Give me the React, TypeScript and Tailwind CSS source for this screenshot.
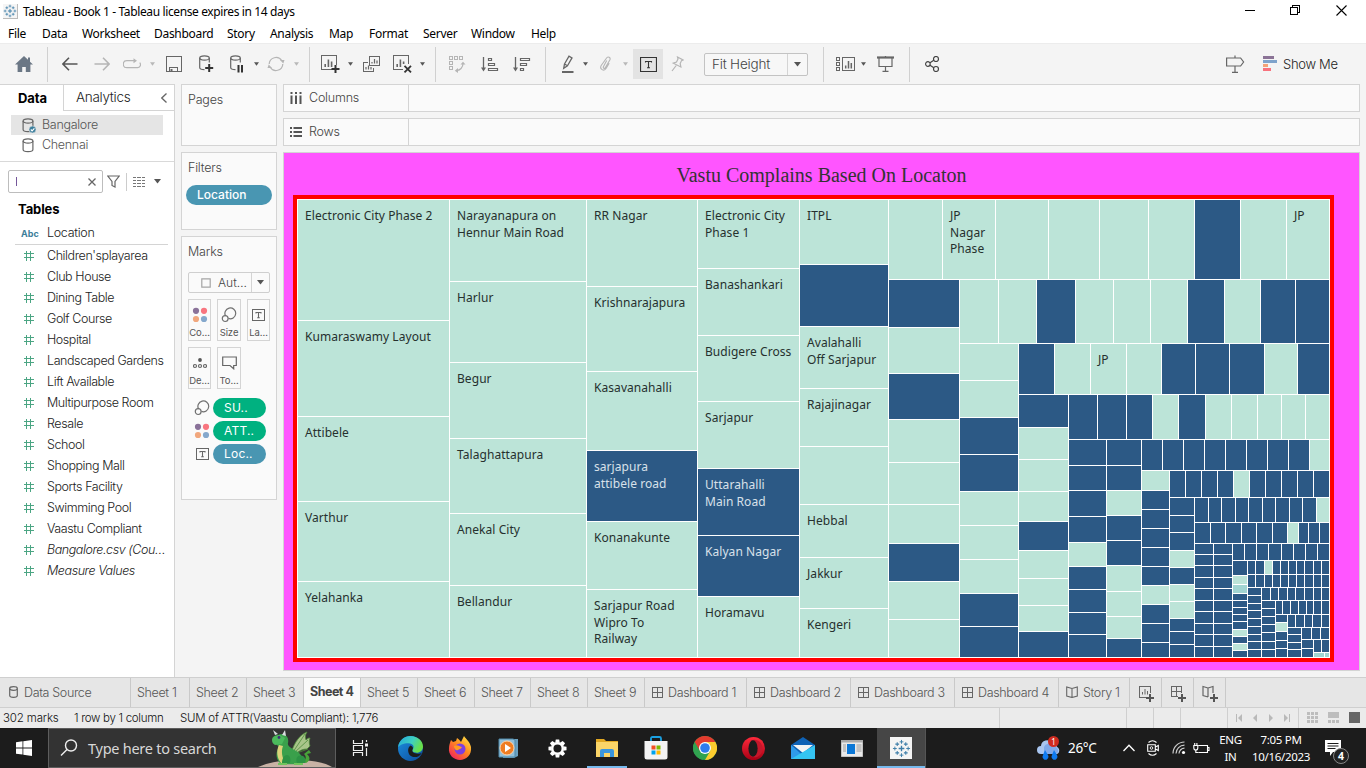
import React from "react";

type P = { children?: React.ReactNode; className?: string };

/* ---------- treemap data ---------- */

type Cell = { x: number; y: number; w: number; h: number; c: string; label?: string[] };

const FILL: Record<string, string> = { L: "#bce4d8", D: "#2c5985", T: "#a1d5d2" };

function column(x0: number, x1: number, ys: number[], colors: string, labels: Record<number, string[]> = {}): Cell[] {
  return ys.slice(1).map((y, i) => ({
    x: x0 + 1, y: ys[i] + 1, w: x1 - x0 - 1, h: y - ys[i] - 1, c: colors[i], label: labels[i],
  }));
}
function row(y0: number, y1: number, xs: number[], colors: string, labels: Record<number, string[]> = {}): Cell[] {
  return xs.slice(1).map((x, i) => ({
    x: xs[i] + 1, y: y0 + 1, w: x - xs[i] - 1, h: y1 - y0 - 1, c: colors[i], label: labels[i],
  }));
}

const tens = [543, 554, 565, 577, 588, 600, 611, 623, 634, 646, 657];
const cells: Cell[] = [
  ...column(297, 449, [199, 320, 416, 501, 581, 657], "LLLLL", {
    0: ["Electronic City Phase 2"], 1: ["Kumaraswamy Layout"], 2: ["Attibele"], 3: ["Varthur"], 4: ["Yelahanka"],
  }),
  ...column(449, 586, [199, 281, 362, 438, 513, 585, 657], "LLLLLL", {
    0: ["Narayanapura on", "Hennur Main Road"], 1: ["Harlur"], 2: ["Begur"], 3: ["Talaghattapura"], 4: ["Anekal City"], 5: ["Bellandur"],
  }),
  ...column(586, 697, [199, 286, 371, 450, 521, 589, 657], "LLLDLL", {
    0: ["RR Nagar"], 1: ["Krishnarajapura"], 2: ["Kasavanahalli"], 3: ["sarjapura", "attibele road"], 4: ["Konanakunte"],
    5: ["Sarjapur Road", "Wipro To", "Railway"],
  }),
  ...column(697, 799, [199, 268, 335, 401, 468, 535, 596, 657], "LLLLDDL", {
    0: ["Electronic City", "Phase 1"], 1: ["Banashankari"], 2: ["Budigere Cross"], 3: ["Sarjapur"],
    4: ["Uttarahalli", "Main Road"], 5: ["Kalyan Nagar"], 6: ["Horamavu"],
  }),
  ...column(799, 888, [199, 264, 326, 388, 446, 504, 557, 608, 657], "LDLLLLLL", {
    0: ["ITPL"], 2: ["Avalahalli", "Off Sarjapur"], 3: ["Rajajinagar"], 5: ["Hebbal"], 6: ["Jakkur"], 7: ["Kengeri"],
  }),
  ...row(199, 279, [888, 942, 995, 1048, 1099, 1148, 1194, 1240, 1286, 1329], "LLLLLLDLL", {
    1: ["JP", "Nagar", "Phase"], 8: ["JP"],
  }),
  ...column(888, 959, [279, 327, 373, 419, 462, 504, 543, 581, 619, 657], "DLDLLLDLL"),
  ...row(279, 343, [959, 998, 1036, 1075, 1113, 1150, 1187, 1224, 1260, 1295, 1329], "LLDLLLDLDD"),
  ...column(959, 1018, [343, 380, 417, 454, 491, 525, 559, 593, 626, 657], "LLDDLLLDD"),
  ...row(343, 394, [1018, 1054, 1090, 1126, 1161, 1195, 1229, 1264, 1297, 1329], "DLLLDDDLD", { 2: ["JP"] }),
  ...column(1018, 1068, [394, 427, 459, 491, 521, 550, 578, 605, 631, 657], "DLLLDLLLD"),
  ...row(394, 439, [1068, 1097, 1126, 1152, 1178, 1205, 1231, 1257, 1281, 1305, 1329], "DDDLDLLLLL"),
  ...column(1068, 1106, [439, 465, 490, 516, 542, 566, 589, 612, 634, 657], "DDDDLDDDD"),
  ...column(1106, 1141, [439, 465, 490, 515, 540, 565, 591, 616, 638, 657], "DDLDDLLLD"),
  ...row(439, 470, [1141, 1162, 1183, 1204, 1225, 1246, 1267, 1288, 1309, 1329], "DDDDDDDDL"),
  ...column(1141, 1169, [470, 490, 509, 528, 547, 566, 585, 604, 623, 642, 657], "LDDDDDLDDD"),
  ...row(470, 497, [1169, 1185, 1201, 1217, 1233, 1249, 1265, 1281, 1297, 1313, 1329], "DDDDLDDDDD"),
  ...column(1169, 1194, [497, 515, 532, 550, 567, 584, 601, 618, 631, 644, 657], "DDDLDLLDDD"),
  ...row(497, 522, [1194, 1208, 1221, 1235, 1248, 1262, 1275, 1289, 1302, 1316, 1329], "DDDDDDDDDL"),
  ...row(522, 543, [1194, 1210, 1225, 1241, 1256, 1272, 1287, 1298, 1308, 1319, 1329], "DDDDDDLDDD"),
  ...column(1194, 1213, tens, "DDDDDDDDDD"),
  ...column(1213, 1232, tens, "DDDDDDDDDD"),
  ...row(543, 560, [1232, 1244, 1256, 1268, 1281, 1293, 1305, 1317, 1329], "DDDDDDDD"),
  ...column(1232, 1247, [560, 575, 584, 593, 600, 607, 614, 621, 629, 636, 643, 650, 657], "DLTDDDDDLDLD"),
  ...row(560, 574, [1247, 1255, 1264, 1272, 1280, 1288, 1296, 1304, 1313, 1321, 1329], "DDLDDDDDDD"),
  ...row(574, 587, [1247, 1255, 1264, 1272, 1280, 1288, 1296, 1304, 1313, 1321, 1329], "DDDDDDDDDD"),
  ...column(1247, 1261, [587, 595, 603, 610, 618, 626, 634, 641, 649, 657], "DDDDDDDDD"),
  ...row(587, 600, [1261, 1270, 1278, 1287, 1295, 1304, 1313, 1321, 1329], "DDDDDDDD"),
  ...column(1261, 1275, [600, 608, 616, 624, 632, 641, 649, 657], "DDDDDDD"),
  ...row(600, 614, [1275, 1282, 1290, 1298, 1306, 1313, 1321, 1329], "DDDDDDD"),
  ...column(1275, 1287, [614, 622, 631, 640, 648, 657], "DLDDD"),
  ...row(614, 627, [1287, 1295, 1304, 1312, 1321, 1329], "DDDDD"),
  ...column(1287, 1301, [627, 634, 642, 649, 657], "DDDD"),
  ...row(627, 639, [1301, 1311, 1320, 1329], "DDD"),
  ...column(1301, 1313, [639, 648, 657], "DD"),
  ...row(639, 652, [1313, 1321, 1329], "DD"),
  ...row(652, 657, [1313, 1324, 1329], "TT"),
];

function Treemap() {
  return (
    <svg width="1041" height="467" viewBox="293 195 1041 467" className="block shrink-0">
      <rect x="293" y="195" width="1041" height="467" fill="#f00" />
      <rect x="297" y="199" width="1033" height="459" fill="#fff" />
      {cells.map((c, i) => (
        <rect key={i} x={c.x} y={c.y} width={c.w} height={c.h} fill={FILL[c.c]} shapeRendering="crispEdges" />
      ))}
      {cells.map((c, i) =>
        c.label?.map((t, j) => (
          <text
            key={`${i}-${j}`}
            x={c.x + 7}
            y={c.y + 20 + j * 16.5}
            fill={c.c === "D" ? "#d8e1ea" : "#26302e"}
            className="font-['Noto_Sans',sans-serif] text-[12px] tracking-[0.06px]"
          >
            {t}
          </text>
        ))
      )}
    </svg>
  );
}

/* ---------- small pieces ---------- */

function Ic({ w, h, children, className = "", stroke = "#666" }: P & { w: number; h: number; stroke?: string }) {
  return (
    <svg width={w} height={h} viewBox={`0 0 ${w} ${h}`} fill="none" stroke={stroke} strokeWidth="1.2" className={`block shrink-0 ${className}`}>
      {children}
    </svg>
  );
}
const Sep = ({ className = "" }: P) => <div className={`h-[35px] w-px shrink-0 bg-[#d0d0d0] ${className}`} />;
const Caret = ({ className = "", light = false }: P & { light?: boolean }) => (
  <Ic w={5} h={4} className={className}><path d="M0 0.3h5L2.5 3.8z" fill={light ? "#b8b8b8" : "#555"} stroke="none" /></Ic>
);
const Drop = ({ className = "" }: P) => (
  <Ic w={7} h={5} className={className}><path d="M0 0h7L3.5 4.5z" fill="#555" stroke="none" /></Ic>
);
const Cyl = () => (
  <>
    <ellipse cx="6" cy="3" rx="4.9" ry="2.2" />
    <path d="M1.1 3v8.5c0 1.2 2 2.2 4.9 2.2s4.9-1 4.9-2.2V3" />
  </>
);
const Dots = ({ s = 18 }: { s?: number }) => (
  <svg width={s} height={s} viewBox="0 0 18 18" className="block shrink-0">
    <circle cx="5" cy="4.8" r="3.1" fill="#8a7299" /><circle cx="13" cy="4.8" r="3.1" fill="#f8757f" />
    <circle cx="5" cy="13" r="3.1" fill="#f1a77d" /><circle cx="13" cy="13" r="3.1" fill="#85a8cc" />
  </svg>
);
const SizeIc = ({ className = "" }: P) => (
  <Ic w={16} h={16} className={className} stroke="#707070">
    <path d="M4.6 9A5.4 5.4 0 1 1 7.4 11.4" /><circle cx="4.2" cy="11.6" r="2.9" />
  </Ic>
);
const LabelIc = ({ w = 13 }: { w?: number }) => (
  <Ic w={w} h={12}>
    <path d={`M.5 .5h${w - 1}v11h-${w - 1}z`} shapeRendering="crispEdges" strokeWidth="1" />
    <path d="M4 4.5V3.5h5v1M6.5 3.5v5M5.2 8.7h2.6" strokeWidth="1.1" />
  </Ic>
);
const GridIc = () => (
  <Ic w={11} h={11} className="mb-[2px] mr-[5px]"><path d="M.5.5h10v10H.5zM5.5.5v10M.5 5.5h10" strokeWidth="1" shapeRendering="crispEdges" /></Ic>
);
const BookIc = ({ className = "" }: P) => (
  <Ic w={12} h={12} className={className}><path d="M6 2.5L.7 1v9L6 11.5 11.3 10V1zM6 2.5v9" strokeWidth="1.1" /></Ic>
);

/* ---------- title + menu ---------- */

function TableauMark({ s, c = "#3c7da8" }: { s: number; c?: string }) {
  return (
    <svg width={s} height={s} viewBox="0 0 20 20" stroke={c} className="block shrink-0">
      <path d="M10 7v6M7 10h6" strokeWidth="1.4" />
      <path d="M10 1v4M8 3h4M10 15v4M8 17h4M1 10h4M3 8v4M15 10h4M17 8v4" strokeWidth="1" />
      <path d="M5.5 3.4v4M3.5 5.4h4M14.5 3.4v4M12.5 5.4h4M5.5 12.6v4M3.5 14.6h4M14.5 12.6v4M12.5 14.6h4" strokeWidth="1.1" />
    </svg>
  );
}

function TitleBar() {
  return (
    <div className="flex h-[23px] bg-white">
      <div className="ml-[3px] mt-[4px] flex h-[15px] w-[15px] items-center justify-center border-b border-r border-[#bbb] bg-[#f5f5f5]"><TableauMark s={14} /></div>
      <div className="ml-[5px] mt-[3px] whitespace-nowrap text-[12px] leading-[17px] tracking-[-0.38px] text-black">
        Tableau - Book 1 - Tableau license expires in 14 days
      </div>
      <div className="ml-auto mr-[19px] flex pt-[5px]">
        <Ic w={10} h={10} stroke="#000"><path d="M0 5.5h10" strokeWidth="1" /></Ic>
        <Ic w={11} h={10} stroke="#000" className="ml-[35px]"><path d="M.5 2.5h7v7h-7zM2.5 2.5v-2h7v7h-2" strokeWidth="1" shapeRendering="crispEdges" /></Ic>
        <Ic w={11} h={11} stroke="#000" className="ml-[35px]"><path d="M.5.5l10 10M10.5.5l-10 10" strokeWidth="1.1" /></Ic>
      </div>
    </div>
  );
}

function MenuBar() {
  const m: [string, string][] = [
    ["File", "w-[34px]"], ["Data", "w-[40px]"], ["Worksheet", "w-[72px]"], ["Dashboard", "w-[73px]"], ["Story", "w-[43px]"],
    ["Analysis", "w-[59px]"], ["Map", "w-[40px]"], ["Format", "w-[54px]"], ["Server", "w-[48px]"], ["Window", "w-[60px]"], ["Help", "w-[40px]"],
  ];
  return (
    <div className="flex h-[20px] bg-white pl-[8px]">
      {m.map(([t, w]) => (
        <div key={t} className={`${w} shrink-0 whitespace-nowrap text-[12px] leading-[22px] tracking-[-0.3px] text-black`}>{t}</div>
      ))}
    </div>
  );
}

/* ---------- toolbar ---------- */

function Toolbar() {
  return (
    <div className="flex h-[41px] items-center border-t border-[#ececec] bg-[#f4f4f4]">
      <Ic w={18} h={16} className="ml-[15px]"><path d="M9 0L0 8.5h2.6V16h4.6v-5h3.6v5h4.6V8.5H18l-3-2.8V1.5h-2v2.3z" fill="#6b7785" stroke="none" /></Ic>
      <Sep className="ml-[14px]" />
      <Ic w={16} h={14} className="ml-[14px]" stroke="#555"><path d="M15.5 7H1M7 .8L.9 7l6.1 6.2" strokeWidth="1.6" /></Ic>
      <Ic w={16} h={14} className="ml-[16px]" stroke="#b5b5b5"><path d="M.5 7H15M9 .8L15.1 7 9 13.2" strokeWidth="1.6" /></Ic>
      <Ic w={18} h={12} className="ml-[13px]" stroke="#b5b5b5"><path d="M12 2.700H3.800a3 3 0 0 0 0 7h10.400a3 3 0 0 0 2.500-5" /><path d="M10.500.2v5L14 2.700z" fill="#b5b5b5" stroke="none" /></Ic>
      <Caret className="ml-[9px]" light />
      <Ic w={16} h={16} className="ml-[11px]"><path d="M.5.5h15v15H.5zM3.5 15.5v-4h8v4" strokeWidth="1" shapeRendering="crispEdges" /><path d="M5.5 13v3" strokeWidth="2" /></Ic>
      <Ic w={15} h={18} className="ml-[17px]">
        <ellipse cx="5.5" cy="3" rx="4.8" ry="2.2" /><path d="M.7 3v9.5c0 1.3 2 2.2 4.8 2.2M10.3 3v4.5" />
        <path d="M10.2 9v8M6.2 13h8" stroke="#333" strokeWidth="2" />
      </Ic>
      <Ic w={14} h={18} className="ml-[16px]">
        <ellipse cx="5.5" cy="3" rx="4.8" ry="2.2" /><path d="M.7 3v9.5c0 1.3 2 2.2 4.8 2.2M10.3 3v4.5" />
        <path d="M8.5 10v7.5M12 10v7.5" stroke="#333" strokeWidth="2" />
      </Ic>
      <Caret className="ml-[10px]" />
      <Ic w={18} h={16} className="ml-[8px]" stroke="#b5b5b5">
        <path d="M2.2 8a6.8 6.8 0 0 1 12.6-3.2M15.8 8A6.8 6.8 0 0 1 3.2 11.2" />
        <path d="M17.5 4h-4.5l3.3 3.5zM.5 12H5L1.7 8.5z" fill="#b5b5b5" stroke="none" />
      </Ic>
      <Caret className="ml-[9px]" light />
      <Sep className="ml-[10px]" />
      <Ic w={19} h={18} className="ml-[11px]">
        <path d="M11 14.5H.5V.5h15v9" strokeWidth="1" shapeRendering="crispEdges" /><path d="M4.2 12V9M7.4 12V4.5M10.6 12V6.5" strokeWidth="1.6" />
        <path d="M14.5 10v8M10.5 14h8" stroke="#333" strokeWidth="2" />
      </Ic>
      <Caret className="ml-[8px]" />
      <Ic w={17} h={16} className="ml-[10px]">
        <path d="M6.5.5h10v9h-10zM4.5 6.5h-4v9h10v-4" strokeWidth="1" shapeRendering="crispEdges" /><path d="M9 7.5V6M11.5 7.5V3M14 7.5V4.5M3 13.5V11M5.5 13.5V9.5M8 13.5V11" />
      </Ic>
      <Ic w={19} h={18} className="ml-[13px]">
        <path d="M10 14.5H.5V.5h15v8" strokeWidth="1" shapeRendering="crispEdges" /><path d="M4.2 12V9M7.4 12V4.5M10.6 9V6.5" strokeWidth="1.6" />
        <path d="M11.5 10.8l6.5 6.5M18 10.8l-6.5 6.5" stroke="#333" strokeWidth="1.8" />
      </Ic>
      <Caret className="ml-[8px]" />
      <Sep className="ml-[10px]" />
      <Ic w={17} h={17} className="ml-[13px]" stroke="#b5b5b5">
        <path d="M.5.5h3v3h-3zM5.5.5h3v3h-3zM10.500.5h3v3h-3zM.5 5.500h3v3h-3zM.5 10.500h3v3h-3z" strokeWidth="1" shapeRendering="crispEdges" />
        <path d="M14 7.500c0 4-3 7-6.500 7" /><path d="M11.500 8.500L14 5.800l2.500 2.700zM9 12l-3.200 2.700L9 17z" fill="#b5b5b5" stroke="none" />
      </Ic>
      <Ic w={18} h={15} className="ml-[15px]">
        <path d="M2.500 0v12" strokeWidth="1.300" /><path d="M0 10.500h5L2.500 14.500z" fill="#666" stroke="none" />
        <path d="M7.500 1.500h3v2h-3zM7.500 6.500h6v2h-6zM7.500 11.500h9v2h-9z" strokeWidth="1.200" />
      </Ic>
      <Ic w={18} h={15} className="ml-[14px]">
        <path d="M2.500 0v12" strokeWidth="1.300" /><path d="M0 10.500h5L2.500 14.500z" fill="#666" stroke="none" />
        <path d="M7.500 1.500h9v2h-9zM7.500 6.500h6v2h-6zM7.500 11.500h3v2h-3z" strokeWidth="1.200" />
      </Ic>
      <Sep className="ml-[14px]" />
      <Ic w={12} h={18} className="ml-[16px]">
        <path d="M2.500 9L7 1.200l3 1.700L5.500 10.700zM2.500 9l-.8 4.300 3.800-2.600" strokeWidth="1.300" /><path d="M0 17h11.500" strokeWidth="2" />
      </Ic>
      <Caret className="ml-[9px]" />
      <Ic w={13} h={16} className="ml-[11px]" stroke="#b5b5b5">
        <path d="M7.700 4.500L4.500 10.500c-.8 1.700 1 2.600 1.900 1l4.400-7.400c1.300-2.600-2-4.300-3.400-1.900L2.200 9.500c-2 3.700 2.800 6.400 5 2.800l3-5" strokeWidth="1.100" />
      </Ic>
      <Caret className="ml-[11px]" light />
      <div className="ml-[5px] flex h-[30px] w-[30px] shrink-0 items-center justify-center bg-[#e3e3e3]">
        <Ic w={17} h={15} stroke="#333"><path d="M.5.5h16v14H.5z" strokeWidth="1.200" /><path d="M5.500 5.500V4.500h6v1M8.500 4.500v6M7 10.800h3" strokeWidth="1.100" /></Ic>
      </div>
      <Ic w={13} h={16} className="ml-[8px]" stroke="#b5b5b5">
        <path d="M6.500 1l5.500 3-1.500.6-1.300 3 .7 3.400L2.300 7.200l3.200-1.100L7 3zM5.200 9.500L1 15" strokeWidth="1.200" />
      </Ic>
      <div className="ml-[20px] flex h-[23px] w-[104px] shrink-0 items-center rounded-[2px] border border-[#c3c3c3] bg-[#f7f7f7]">
        <span className="w-[84px] pl-[7px] font-['Inter',sans-serif] text-[13.5px] font-light leading-[20px] tracking-[-0.2px] text-[#444]">Fit Height</span>
        <span className="flex h-full w-[20px] items-center justify-center border-l border-[#d4d4d4]"><Drop /></span>
      </div>
      <Sep className="ml-[15px]" />
      <Ic w={19} h={14} className="ml-[12px]">
        <path d="M.5.5h3v3h-3zM.5 5.500h3v3h-3zM.5 10.500h3v3h-3zM6.500.5h12v13h-12z" strokeWidth="1" shapeRendering="crispEdges" />
        <path d="M9.700 11.500v-3M12.500 11.500V4M15.300 11.500V6" strokeWidth="1.500" />
      </Ic>
      <Caret className="ml-[6px]" />
      <Ic w={17} h={16} className="ml-[11px]">
        <path d="M0 1.500h17" strokeWidth="2.200" /><path d="M2 2v8.500h13V2M8.500 10.500v5M5.500 15.300h6M8.500 0v1" />
      </Ic>
      <Sep className="ml-[15px]" />
      <Ic w={15} h={16} className="ml-[15px]" stroke="#444">
        <circle cx="2.900" cy="8" r="2.300" /><circle cx="11" cy="3" r="2.500" /><circle cx="11" cy="13" r="2.500" /><path d="M5 6.800L8.800 4.300M5 9.200l3.800 2.500" />
      </Ic>
      <Ic w={19} h={18} className="ml-auto"><path d="M.6 3h14l3 4-3 4H.6zM9 .5V3M9 11v6.500M6 17.300h6" /></Ic>
      <Ic w={14} h={16} className="ml-[18px]"><g stroke="none"><path d="M0 0h11v3H0z" fill="#8b7396" /><path d="M0 4h14v3H0z" fill="#7fa3cb" /><path d="M0 8h5v3H0z" fill="#f3a277" /><path d="M0 12h8v3H0z" fill="#f8727d" /></g></Ic>
      <div className="ml-[6px] w-[83px] whitespace-nowrap font-['Inter',sans-serif] text-[13px] font-light leading-[20px] tracking-[-0.3px] text-[#222]">Show Me</div>
    </div>
  );
}

/* ---------- data pane ---------- */

const fields = [
  "Children'splayarea", "Club House", "Dining Table", "Golf Course", "Hospital", "Landscaped Gardens", "Lift Available",
  "Multipurpose Room", "Resale", "School", "Shopping Mall", "Sports Facility", "Swimming Pool", "Vaastu Compliant",
  "Bangalore.csv (Cou…", "Measure Values",
];

function DataPane() {
  return (
    <div className="flex w-[175px] shrink-0 flex-col border-r border-t border-[#d4d4d4] bg-white font-['Inter',sans-serif] text-[12.5px] font-light tracking-[-0.3px] text-[#222]">
      <div className="flex h-[26px]">
        <div className="w-[63px] pl-[18px] text-[13px] font-bold leading-[26px] tracking-[-0.1px] text-black">Data</div>
        <div className="flex flex-1 items-center border-b border-l border-[#d4d4d4]">
          <span className="ml-[12px] text-[13.5px] text-[#222]">Analytics</span>
          <Ic w={6} h={10} className="ml-auto mr-[7px]"><path d="M5.500.5L.8 5l4.700 4.500" strokeWidth="1.300" /></Ic>
        </div>
      </div>
      <div className="ml-[11px] mt-[4px] flex h-[20px] w-[152px] items-center bg-[#e5e5e5] text-[#555]">
        <Ic w={14} h={15} className="ml-[11px]"><Cyl /><circle cx="10.500" cy="11.500" r="3.500" fill="#3b7e9c" stroke="#e5e5e5" strokeWidth=".6" /><path d="M8.800 11.500l1.300 1.300 2.300-2.500" stroke="#fff" /></Ic>
        <span className="ml-[6px] leading-[20px]">Bangalore</span>
      </div>
      <div className="ml-[22px] flex h-[20px] items-center text-[#555]"><Ic w={14} h={15}><Cyl /></Ic><span className="ml-[6px]">Chennai</span></div>
      <div className="mt-[6px] h-px shrink-0 bg-[#d9d9d9]" />
      <div className="ml-[8px] mt-[8px] flex h-[23px] items-center">
        <div className="flex h-[23px] w-[95px] shrink-0 items-center rounded-[2px] border border-[#bdbdbd] pl-[7px]">
          <span className="h-[9px] w-px bg-[#75579a]" />
          <Ic w={8} h={8} className="ml-auto mr-[6px]"><path d="M.5.5l7 7M7.500.5l-7 7" strokeWidth="1.300" /></Ic>
        </div>
        <Ic w={13} h={13} className="ml-[4px]"><path d="M.8 1h11.400L8 6.500V12l-3-1.500v-4z" /></Ic>
        <div className="ml-[6px] h-[18px] w-px bg-[#ccc]" />
        <Ic w={12} h={10} className="ml-[6px]"><path d="M0 .5h12M0 3.500h12M0 6.500h12M0 9.500h12" strokeWidth="1.300" strokeDasharray="3.300 1" stroke="#777" shapeRendering="crispEdges" /></Ic>
        <Drop className="ml-[9px]" />
      </div>
      <div className="ml-[18px] mt-[6px] h-[20px] text-[13px] font-bold leading-[21px] tracking-[-0.1px] text-black">Tables</div>
      <div className="ml-[15px] mt-[4px] flex h-[22px] w-[153px] items-center border-b border-[#d4d4d4]">
        <span className="w-[32px] pl-[6px] text-[9px] font-bold tracking-[0px] text-[#3c7e9a]">Abc</span>
        <span>Location</span>
      </div>
      <div className="flex flex-col">
        {fields.map((f, i) => (
          <div key={f} className="flex h-[21px] items-center">
            <Ic w={11} h={11} className="ml-[23px] mr-[13px]" stroke="#4ba583"><path d="M3.500 .5v10M7.500 .5v10M.5 3.500h10M.5 7.500h10" strokeWidth="1" shapeRendering="crispEdges" /></Ic>
            <span className={`whitespace-nowrap pt-[1px] tracking-[-0.42px] ${i > 13 ? "italic" : ""}`}>{f}</span>
          </div>
        ))}
      </div>
    </div>
  );
}

/* ---------- cards ---------- */

const Card = ({ title, children, className = "" }: P & { title: string }) => (
  <div className={`w-[96px] border border-[#d4d4d4] bg-[#fafafa] ${className}`}>
    <div className="ml-[6px] mt-[6px] text-[12.5px] font-light leading-[18px] tracking-[-0.2px] text-[#444]">{title}</div>
    {children}
  </div>
);
const MarkBtn = ({ label, children, className = "" }: P & { label: string }) => (
  <div className={`flex h-[42px] flex-col items-center border border-[#d4d4d4] bg-[#fafafa] ${className}`}>
    <div className="flex h-[27px] items-center pt-[2px]">{children}</div>
    <div className="text-[9.500px] leading-[12px] tracking-[-0.1px] text-[#555]">{label}</div>
  </div>
);
const MarkRow = ({ label, children, className = "" }: P & { label: string }) => (
  <div className="mb-[3px] flex h-[20px] items-center">
    <div className="ml-[11px] flex w-[18px] shrink-0 items-center justify-center">{children}</div>
    <div className={`ml-[2px] h-[20px] w-[53px] rounded-full pl-[11px] text-[12px] leading-[20px] tracking-[0.2px] text-white ${className}`}>{label}</div>
  </div>
);

function Cards() {
  return (
    <div className="ml-[6px] w-[96px] shrink-0 font-['Inter',sans-serif]">
      <Card title="Pages" className="h-[62px]" />
      <Card title="Filters" className="mt-[6px] h-[78px]">
        <div className="ml-[4px] mt-[8px] h-[20px] w-[86px] rounded-full bg-[#4996b2] pl-[11px] text-[12px] font-medium leading-[20px] tracking-[0px] text-white">Location</div>
      </Card>
      <Card title="Marks" className="mt-[6px] h-[264px]">
        <div className="ml-[6px] mt-[11px] flex h-[21px] w-[82px] items-center rounded-[2px] border border-[#cfcfcf]">
          <Ic w={10} h={10} className="ml-[12px]"><path d="M.8.8h8.400v8.400H.8z" stroke="#a5a5a5" /></Ic>
          <span className="ml-[7px] w-[33px] text-[12px] font-light text-[#444]">Aut…</span>
          <span className="flex h-full flex-1 items-center justify-center border-l border-[#d4d4d4]"><Drop /></span>
        </div>
        <div className="ml-[6px] mt-[6px] flex">
          <MarkBtn label="Co…" className="w-[23px]"><Dots /></MarkBtn>
          <MarkBtn label="Size" className="ml-[6px] w-[24px]"><SizeIc /></MarkBtn>
          <MarkBtn label="La…" className="ml-[6px] w-[23px]"><LabelIc /></MarkBtn>
        </div>
        <div className="ml-[6px] mt-[6px] flex">
          <MarkBtn label="De…" className="w-[23px]">
            <Ic w={14} h={12}><circle cx="7" cy="3" r="1.900" fill="#555" stroke="none" /><circle cx="2" cy="9" r="1.500" /><circle cx="7" cy="9" r="1.500" /><circle cx="12" cy="9" r="1.500" /></Ic>
          </MarkBtn>
          <MarkBtn label="To…" className="ml-[6px] w-[24px]">
            <Ic w={15} h={14}><path d="M.7 1h13.600v8.500h-2.600v3.300L8 9.500H.7z" /></Ic>
          </MarkBtn>
        </div>
        <div className="mt-[9px]">
          <MarkRow label="SU.." className="bg-[#00b180]"><SizeIc /></MarkRow>
          <MarkRow label="ATT.." className="bg-[#00b180]"><Dots /></MarkRow>
          <MarkRow label="Loc.." className="bg-[#4996b2]"><LabelIc /></MarkRow>
        </div>
      </Card>
    </div>
  );
}

const Shelf = ({ label, children, className = "" }: P & { label: string }) => (
  <div className={`flex h-[28px] border border-[#d4d4d4] bg-[#fafafa] font-['Inter',sans-serif] text-[12.5px] font-light tracking-[-0.2px] text-[#444] ${className}`}>
    <div className="flex w-[125px] items-center border-r border-[#d4d4d4] pl-[6px]">{children}<span className="ml-[7px]">{label}</span></div>
  </div>
);

/* ---------- sheet tabs + status ---------- */

const Tab = ({ children, className = "" }: P) => (
  <div className={`flex h-full shrink-0 items-center whitespace-nowrap border-r border-[#c9c9c9] pl-[6px] pt-px text-[12.5px] ${className}`}>{children}</div>
);
const Plus = () => <path d="M12 9v8M8 13h8" stroke="#555" strokeWidth="2" />;

function SheetTabs() {
  return (
    <div className="flex h-[31px] border-b border-t border-[#cfcfcf] bg-[#e6e6e6] font-['Inter',sans-serif] font-light tracking-[-0.35px] text-[#555]">
      <Tab className="w-[131px] pl-[9px]"><Ic w={9} h={12} className="mb-[2px] mr-[6px]"><ellipse cx="4.500" cy="2.500" rx="3.800" ry="1.800" /><path d="M.7 2.500v7c0 1 1.700 1.800 3.800 1.800s3.800-.8 3.800-1.800v-7" /></Ic>Data Source</Tab>
      <Tab className="w-[59px]">Sheet 1</Tab>
      <Tab className="w-[57px]">Sheet 2</Tab>
      <Tab className="w-[57px]">Sheet 3</Tab>
      <Tab className="w-[57px] bg-[#fafafa] pb-[2px] font-bold tracking-[-0.5px] text-[#444]">Sheet 4</Tab>
      <Tab className="w-[57px]">Sheet 5</Tab>
      <Tab className="w-[57px]">Sheet 6</Tab>
      <Tab className="w-[56px]">Sheet 7</Tab>
      <Tab className="w-[57px]">Sheet 8</Tab>
      <Tab className="w-[57px]">Sheet 9</Tab>
      <Tab className="w-[102px] pl-[7px]"><GridIc />Dashboard 1</Tab>
      <Tab className="w-[104px] pl-[7px]"><GridIc />Dashboard 2</Tab>
      <Tab className="w-[104px] pl-[7px]"><GridIc />Dashboard 3</Tab>
      <Tab className="w-[104px] pl-[7px]"><GridIc />Dashboard 4</Tab>
      <Tab className="w-[71px] pl-[7px]"><BookIc className="mb-[2px] mr-[5px]" />Story 1</Tab>
      <Tab className="w-[32px] pl-[8px]"><Ic w={17} h={17}><path d="M8 12.500H1.500v-11h11v6" strokeWidth="1" shapeRendering="crispEdges" /><path d="M4.500 9.500V7M7 9.500V4M9.500 9.500V6" strokeWidth="1" /><Plus /></Ic></Tab>
      <Tab className="w-[32px] pl-[8px]"><Ic w={17} h={17}><path d="M8 11.500H1.500v-10h10v6M6.500 1.500v10M1.500 6.500h10" strokeWidth="1" shapeRendering="crispEdges" /><Plus /></Ic></Tab>
      <Tab className="w-[32px] pl-[8px]"><Ic w={17} h={17}><path d="M6 3L1 1.500v9L6 12M6 3l5-1.500V8M6 3v9" /><Plus /></Ic></Tab>
    </div>
  );
}

function Status() {
  return (
    <div className="flex h-[20px] items-stretch bg-[#ebebeb] font-['Inter',sans-serif] text-[11.5px] font-light leading-[20px] text-[#111]">
      <span className="ml-[3px] w-[71px] whitespace-nowrap tracking-[-0.15px]">302 marks</span>
      <span className="w-[106px] whitespace-nowrap tracking-[-0.3px]">1 row by 1 column</span>
      <span className="whitespace-nowrap tracking-[-0.25px]">SUM of ATTR(Vaastu Compliant): 1,776</span>
      <div className="ml-auto flex w-[367px] items-stretch">
        <div className="w-[127px] border-l border-[#cfcfcf]" />
        <div className="w-[27px] border-l border-[#cfcfcf]" />
        <div className="w-[27px] border-l border-[#cfcfcf]" />
        <div className="w-[47px] border-l border-[#cfcfcf]" />
        <div className="flex w-[71px] items-center border-l border-[#cfcfcf] pl-[8px]">
          <svg width="56" height="8" viewBox="0 0 56 8" fill="#b9b9b9"><path d="M0 0h1v8H0zM6 0v8L2 4zM21 0v8l-4-4zM33 0v8l4-4zM48 0v8l4-4zM53 0h1v8h-1z" /></svg>
        </div>
        <div className="flex flex-1 items-center border-l border-[#cfcfcf] pl-[8px]">
          <svg width="54" height="12" viewBox="0 0 54 12" shapeRendering="crispEdges">
            <path d="M0 0h3v3H0zM4 0h3v3H4zM8 0h3v3H8zM0 4h3v3H0zM4 4h3v3H4zM8 4h3v3H8zM0 8h3v3H0zM4 8h3v3H4zM8 8h3v3H8zM21 0h11v6H21zM21 8h3v3h-3zM25 8h3v3h-3zM29 8h3v3h-3z" fill="#bdbdbd" />
            <path d="M42 0h11v11H42z" fill="#666" />
          </svg>
        </div>
      </div>
    </div>
  );
}

/* ---------- taskbar ---------- */

const Task = ({ children, className = "" }: P) => (
  <div className={`flex h-[40px] w-[49px] shrink-0 items-center justify-center ${className}`}>{children}</div>
);

function Dragon() {
  return (
    <svg width="76" height="38" viewBox="0 0 76 38" className="block shrink-0">
      <path d="M0 38C12 33 24 31 38 31s28 2 36 7z" fill="#c9b2a5" />
      <path d="M33 24C37 12 42 6 49 3c-2 3-2 5-1 8 2-2 3-2 4-2-1 3-1 5 0 8l-3 3c-6 0-10 3-14 8z" fill="#a9c58a" stroke="#4e8b3a" strokeWidth=".8" />
      <path d="M35 23L47 5M36 24l14-13M36 25l14-5" stroke="#4e8b3a" strokeWidth=".8" />
      <path d="M17 14c-1-5 2-9 7-9 5 1 7 4 6 9-1 4 5 6 10 9 5 4 4 8 9 9-5 4-22 4-27 2-5-5-4-12-1-16z" fill="#3aa04b" />
      <path d="M48 34c5-3 4-6 1-9l4-1-2-3-5 4c3 3 2 6-2 8z" fill="#48a339" />
      <path d="M21 16c-3 6-2 13 2 18h4c-3-6-4-12-2-17z" fill="#ddd27b" />
      <path d="M14 11c0-4 4-5 8-5l5 3-3 6-7 1c-2-1-3-3-3-5z" fill="#4bb95c" />
      <path d="M17 6l-2-5 5 4zM24 6l3-5 1 6z" fill="#d9dde0" />
      <circle cx="21" cy="8.500" r="1.400" fill="#43307a" />
      <path d="M24 34c0-4 2-8 5-8s4 4 3 8zM39 34c-2-5 1-9 6-7 3 2 3 5 2 7z" fill="#2d9344" />
      <path d="M20 35h9M36 35h9" stroke="#70c45c" strokeWidth="2" />
    </svg>
  );
}

function Taskbar() {
  return (
    <div className="flex h-[40px] bg-[#1c1c1c] text-white">
      <div className="flex w-[48px] shrink-0 items-center justify-center">
        <svg width="16" height="16" viewBox="0 0 16 16" fill="#fff"><path d="M0 2.200L6.500 1.300v6.200H0zM7.300 1.200L16 0v7.500H7.300zM0 8.400h6.500v6.200L0 13.700zM7.300 8.400H16V16l-8.700-1.200z" /></svg>
      </div>
      <div className="flex w-[288px] shrink-0 items-center border border-[#5d5d5d] bg-[#333]">
        <Ic w={18} h={18} stroke="#eee" className="ml-[11px]"><circle cx="11" cy="6.500" r="5.500" strokeWidth="1.400" /><path d="M7 10.500L1 16.500" strokeWidth="1.500" /></Ic>
        <span className="ml-[10px] whitespace-nowrap text-[14.500px] leading-[20px] tracking-[-0.26px] text-[#d8d8d8]">Type here to search</span>
        <div className="ml-auto mr-px"><Dragon /></div>
      </div>
      <div className="flex">
        <Task>
          <Ic w={17} h={16} stroke="#eee"><path d="M1.500 0v3.500h9V0M1.500 16v-3.500h9V16M1.500 5.500h9v5h-9zM14.500 0v2M14.500 8v8" strokeWidth="1.200" /><path d="M13 3.500h3v3h-3z" fill="#eee" stroke="none" /></Ic>
        </Task>
        <Task className="ml-px">
          <svg width="25" height="25" viewBox="0 0 24 24">
            <defs>
              <linearGradient id="e1" x1="0" y1="0" x2="1" y2=".4"><stop offset="0" stopColor="#23a7dc" /><stop offset=".6" stopColor="#3fd0c0" /><stop offset="1" stopColor="#68e04a" /></linearGradient>
              <linearGradient id="e2" x1="0" y1="0" x2="1" y2="1"><stop offset="0" stopColor="#1c8fe0" /><stop offset="1" stopColor="#0c4a9a" /></linearGradient>
            </defs>
            <circle cx="12" cy="12" r="12" fill="url(#e2)" />
            <path d="M0 11C1 4 6 0 12 0c7 0 12 5 12 10 0 4-3 6-6 6-3 0-5-1-4-3 2-2 1-6-4-6C5 7 1 9 0 11z" fill="url(#e1)" />
            <path d="M14 13c-1 2 1 4 5 4 2 0 3-.5 4-1-3 5-8 5-11 3-3-3-3-8 0-10 2 1 3 2 2 4z" fill="#1c1c1c" />
          </svg>
        </Task>
        <Task>
          <svg width="24" height="24" viewBox="0 0 24 24">
            <defs><linearGradient id="f1" x1="1" y1="0" x2=".2" y2="1"><stop offset="0" stopColor="#fff04a" /><stop offset=".5" stopColor="#ff8a1f" /><stop offset="1" stopColor="#f2215c" /></linearGradient></defs>
            <path d="M3 4l2 2 3-1 1-3c2 1 3 3 4 4l3-6c2 3 6 6 7 11 1 8-5 13-11 13S0 19 1 12c0-3 1-5 2-8z" fill="url(#f1)" />
            <circle cx="12" cy="13" r="5.500" fill="#7b3fe0" /><path d="M6 10c3-2 6 1 8 1-1 2-3 2-4 3-2 1-4-1-4-4z" fill="#ff9a20" />
          </svg>
        </Task>
        <Task>
          <svg width="21" height="20" viewBox="0 0 21 20"><path d="M5 1h15v17l-4 2H5z" fill="#6aa0bf" /><path d="M1 1h14l2 1v17H1z" fill="#92c0da" stroke="#4f88a8" /><circle cx="9" cy="10" r="7" fill="#ef7d22" stroke="#fbd3ab" /><path d="M7 6l6 4-6 4z" fill="#fff" /></svg>
        </Task>
        <Task>
          <svg width="19" height="19" viewBox="-10 -10 20 20">
            <circle r="5.500" fill="none" stroke="#fff" strokeWidth="2.500" />
            {[0, 45, 90, 135, 180, 225, 270, 315].map((a) => <path key={a} d="M-1.800 -9.500h3.600l.6 3.500h-4.800z" fill="#fff" transform={`rotate(${a})`} />)}
          </svg>
        </Task>
        <Task className="relative">
          <svg width="22" height="18" viewBox="0 0 22 18"><path d="M0 0h8l2 2h12v16H0z" fill="#e2a822" /><path d="M0 3h22v15H0z" fill="#fbd568" /><path d="M4 18v-6q0-2 2-2h10q2 0 2 2v6h-4v-4H8v4z" fill="#3a96dd" /></svg>
          <div className="absolute bottom-0 left-[5px] h-[2px] w-[40px] bg-[#76b9ed]" />
        </Task>
        <Task>
          <svg width="24" height="24" viewBox="0 0 24 24"><path d="M7 6V2.500Q7 1 8.500 1h7Q17 1 17 2.500V6" fill="none" stroke="#1ba1e2" strokeWidth="1.800" /><path d="M.5 5h23v16q0 2.500-2.500 2.500H3Q.5 23.500.5 21z" fill="#f4f4f4" /><path d="M7.500 9.500h4v4h-4z" fill="#f25022" /><path d="M12.500 9.500h4v4h-4z" fill="#7fba00" /><path d="M7.500 14.500h4v4h-4z" fill="#00a4ef" /><path d="M12.500 14.500h4v4h-4z" fill="#ffb900" /></svg>
        </Task>
        <Task>
          <svg width="24" height="24" viewBox="0 0 24 24"><circle cx="12" cy="12" r="12" fill="#31a350" /><path d="M1.600 6A12 12 0 0 1 22.400 6H12l-5.200 9z" fill="#e33b2e" /><path d="M22.400 6A12 12 0 0 1 12 24l5.200-9L17.200 9 12 6z" fill="#fccc2e" /><path d="M1.600 6l5.200 9a6 6 0 0 0 5.200 3l-2 5.800A12 12 0 0 1 1.600 6z" fill="#31a350" /><circle cx="12" cy="12" r="6" fill="#fff" /><circle cx="12" cy="12" r="4.800" fill="#2f7ced" /></svg>
        </Task>
        <Task>
          <svg width="23" height="23" viewBox="0 0 24 24"><defs><linearGradient id="o1" x1="0" y1="0" x2="0" y2="1"><stop offset="0" stopColor="#ff2a3c" /><stop offset="1" stopColor="#a70014" /></linearGradient></defs><circle cx="12" cy="12" r="12" fill="url(#o1)" /><path d="M8.500 4.200c6-4 13 1 13 7.800s-7 11.800-13 7.800c10 1 10-16.600 0-15.600z" fill="#c5172b" /><ellipse cx="11.500" cy="12" rx="4.800" ry="8.600" fill="#1c1c1c" /></svg>
        </Task>
        <Task>
          <svg width="24" height="22" viewBox="0 0 24 22"><path d="M0 8L12 0l12 8v14H0z" fill="#0f62b5" /><path d="M2 8h20l-10 8z" fill="#f3f3f3" /><path d="M0 8l16 14H0z" fill="#2f9bea" /><path d="M24 8v14H0L12 15z" fill="#35c4f2" /></svg>
        </Task>
        <Task>
          <svg width="22" height="17" viewBox="0 0 22 17"><path d="M0 0h22v17H0z" fill="#e9e9e9" stroke="#8b8b8b" strokeWidth=".8" /><path d="M0 0h22v2.500H0z" fill="#aaa" /><path d="M6 4h8v10H6z" fill="#0b77d6" /><path d="M2 5h3M2 7h3M2 9h3M2 11h3M15.500 5h5M15.500 7h5M15.500 9h5M15.500 11h5" stroke="#888" strokeWidth=".8" /></svg>
        </Task>
        <Task className="relative ml-px border-r border-[#555] bg-[#464646]">
          <div className="flex h-[22px] w-[22px] items-center justify-center bg-[#f4f4f4]"><TableauMark s={19} /></div>
          <div className="absolute bottom-0 left-0 h-[2px] w-full bg-[#76b9ed]" />
        </Task>
      </div>
      <div className="ml-auto flex w-[329px] shrink-0 items-center">
        <div className="relative h-[26px] w-[24px]">
          <svg width="24" height="26" viewBox="0 0 24 26"><path d="M4 19a4 4 0 0 1 0-8 6 6 0 0 1 11-3 5 5 0 0 1 5 4c3 1 3 6 0 7z" fill="#a9c6f0" /><path d="M7 12a5 5 0 0 1 9-1 5 5 0 0 1 4 2c2 2 1 5-1 6H7z" fill="#7fa9ea" /><path d="M8 15l3 5a3 3 0 1 1-5 0zM17 15l3 5a3 3 0 1 1-5 0z" fill="#0f7bf0" /></svg>
          <div className="absolute right-[2px] top-px flex h-[11px] w-[11px] items-center justify-center rounded-full bg-[#d02b20] text-[8px] leading-none">1</div>
        </div>
        <span className="ml-[7px] w-[55px] text-[13.500px] leading-[20px] tracking-[-0.3px]">26°C</span>
        <Ic w={12} h={8} stroke="#fff"><path d="M.5 7L6 1.200 11.500 7" strokeWidth="1.300" /></Ic>
        <Ic w={12} h={16} stroke="#fff" className="ml-[12px]"><path d="M1.500 2.500Q5.500-1 9.500 2.500M1.500 13.500q4 3.500 8 0M.7 4.800h7.600v6.400H.7zM8.500 7l2.800-1.500v5L8.500 9" strokeWidth="1.100" /><circle cx="4.500" cy="8" r="1.300" strokeWidth=".9" /></Ic>
        <Ic w={14} h={14} stroke="#ccc" className="ml-[13px]"><path d="M1 12.500A11.500 11.500 0 0 1 12.500 1M4 12.500A8.500 8.500 0 0 1 12.500 4.200M7 12.500a5.500 5.500 0 0 1 5.500-5.300" strokeWidth="1.200" /><circle cx="11.500" cy="11.500" r="1.600" fill="#fff" stroke="none" /></Ic>
        <Ic w={17} h={13} stroke="#fff" className="ml-[7px]"><path d="M5.500 3.500h9v7H6M14.500 5.500h1.500v3h-1.500M.8 3.500h4v2.500a2 2 0 0 1-4 0zM1.700 1v2.500M3.900 1v2.500M2.800 8v2.500h3" strokeWidth="1.100" /></Ic>
        <div className="ml-[8px] w-[25px] text-center text-[11.500px] leading-[17px] tracking-[-0.3px]"><div>ENG</div><div>IN</div></div>
        <div className="ml-[5px] w-[66px] text-center text-[11.500px] leading-[17px] tracking-[-0.3px]"><div className="whitespace-nowrap">7:05 PM</div><div className="whitespace-nowrap">10/16/2023</div></div>
        <div className="relative ml-[11px] mt-[8px] h-[24px] w-[24px]">
          <svg width="17" height="17" viewBox="0 0 17 17" className="block"><path d="M0 0h16v12H8l-3 4v-4H0z" fill="#fff" /><path d="M2.500 3.500h11M2.500 6h11M2.500 8.500h8" stroke="#1c1c1c" strokeWidth="1" /></svg>
          <div className="absolute bottom-0 right-0 flex h-[16px] w-[16px] items-center justify-center rounded-full border border-[#888] bg-[#222] text-[10.500px] font-bold leading-none">4</div>
        </div>
      </div>
    </div>
  );
}

/* ---------- page ---------- */

export default function App() {
  return (
    <div className="flex h-[768px] w-[1366px] flex-col overflow-hidden bg-[#f4f4f4] font-['Noto_Sans',sans-serif]">
      <TitleBar />
      <MenuBar />
      <Toolbar />
      <div className="flex h-[593px]">
        <DataPane />
        <Cards />
        <div className="ml-[6px] w-[1077px] shrink-0">
          <Shelf label="Columns">
            <Ic w={12} h={12}><path d="M.5 0h2v2h-2zM5 0h2v2H5zM9.500 0h2v2h-2zM.5 3.500h2V12h-2zM5 3.500h2V12H5zM9.500 3.500h2V12h-2z" fill="#555" stroke="none" /></Ic>
          </Shelf>
          <Shelf label="Rows" className="mt-[6px]">
            <Ic w={12} h={12}><path d="M0 1h2v2H0zM0 5h2v2H0zM0 9h2v2H0zM3.500 1H12v2H3.500zM3.500 5H12v2H3.500zM3.500 9H12v2H3.500z" fill="#555" stroke="none" /></Ic>
          </Shelf>
          <div className="mt-[6px] flex h-[519px] flex-col border border-[#d4d4d4] bg-[#ff55ff] pl-[9px]">
            <div className="h-[42px] w-[1057px] pt-[8px] text-center font-['Liberation_Serif',serif] text-[20px] leading-[28px] text-[#333]">
              Vastu Complains Based On Locaton
            </div>
            <Treemap />
          </div>
        </div>
      </div>
      <SheetTabs />
      <Status />
      <Taskbar />
    </div>
  );
}
